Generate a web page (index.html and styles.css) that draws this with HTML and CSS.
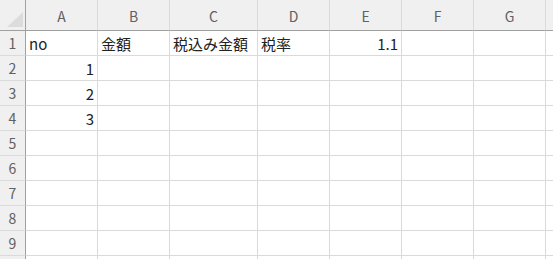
FILE: index.html
```html
<!DOCTYPE html>
<html lang="ja">
<head>
    <meta charset="UTF-8">
    <meta name="viewport" content="width=device-width, initial-scale=1.0">
    <title>Sheet1</title>
    <link rel="stylesheet" href="styles.css">
</head>
<body>
    <div class="sheet">
        <div class="corner"><span class="tri"></span></div>
        <div class="col-head">A</div>
        <div class="col-head">B</div>
        <div class="col-head">C</div>
        <div class="col-head">D</div>
        <div class="col-head">E</div>
        <div class="col-head">F</div>
        <div class="col-head">G</div>
        <div class="col-head last"></div>

        <div class="row-head">1</div>
        <div class="cell">no</div>
        <div class="cell">金額</div>
        <div class="cell">税込み金額</div>
        <div class="cell">税率</div>
        <div class="cell num">1.1</div>
        <div class="cell"></div>
        <div class="cell"></div>
        <div class="cell last"></div>

        <div class="row-head">2</div>
        <div class="cell num">1</div>
        <div class="cell"></div><div class="cell"></div><div class="cell"></div>
        <div class="cell"></div><div class="cell"></div><div class="cell"></div>
        <div class="cell last"></div>

        <div class="row-head">3</div>
        <div class="cell num">2</div>
        <div class="cell"></div><div class="cell"></div><div class="cell"></div>
        <div class="cell"></div><div class="cell"></div><div class="cell"></div>
        <div class="cell last"></div>

        <div class="row-head">4</div>
        <div class="cell num">3</div>
        <div class="cell"></div><div class="cell"></div><div class="cell"></div>
        <div class="cell"></div><div class="cell"></div><div class="cell"></div>
        <div class="cell last"></div>
    </div>

    <script>
        // 空の行 5〜9 を追加（10 行目は見切れるので番号なし）
        const sheet = document.querySelector('.sheet');
        for (let r = 5; r <= 10; r++) {
            const head = document.createElement('div');
            head.className = 'row-head';
            head.textContent = r < 10 ? r : '';
            sheet.appendChild(head);
            for (let c = 0; c < 8; c++) {
                const cell = document.createElement('div');
                cell.className = c === 7 ? 'cell last' : 'cell';
                sheet.appendChild(cell);
            }
        }
    </script>
</body>
</html>
```

FILE: styles.css
```css
body {
    margin: 0;
    background-color: #ffffff;
    font-family: "Noto Sans CJK JP", "Noto Sans", sans-serif;
    overflow: hidden;
}

.sheet {
    display: grid;
    grid-template-columns: 26px 72px 72px 88px 72px 72px 72px 72px 1fr;
    grid-template-rows: 31px repeat(10, 25px);
    width: 553px;
}

.sheet > div {
    box-sizing: border-box;
    display: flex;
    align-items: center;
}

.corner {
    position: relative;
    background-color: #f0f0f0;
    border-right: 1px solid #a0a0a0;
    border-bottom: 1px solid #a0a0a0;
}

.corner .tri {
    position: absolute;
    right: 2px;
    bottom: 3px;
    width: 0;
    height: 0;
    border-left: 16px solid transparent;
    border-bottom: 15px solid #dcdcdc;
}

.col-head {
    justify-content: center;
    background-color: #f0f0f0;
    border-right: 1px solid #dadada;
    border-bottom: 1px solid #a0a0a0;
    color: #616161;
    font-size: 14px;
    padding-top: 1px;
}

.row-head {
    justify-content: center;
    background-color: #f0f0f0;
    border-right: 1px solid #a0a0a0;
    border-bottom: 1px solid #dadada;
    color: #616161;
    font-size: 14px;
}

.cell {
    padding: 0 3px;
    border-right: 1px solid #dadada;
    border-bottom: 1px solid #dadada;
    color: #222222;
    font-size: 15px;
    white-space: nowrap;
}

.cell.num {
    justify-content: flex-end;
}

.last {
    border-right: none;
}
```
